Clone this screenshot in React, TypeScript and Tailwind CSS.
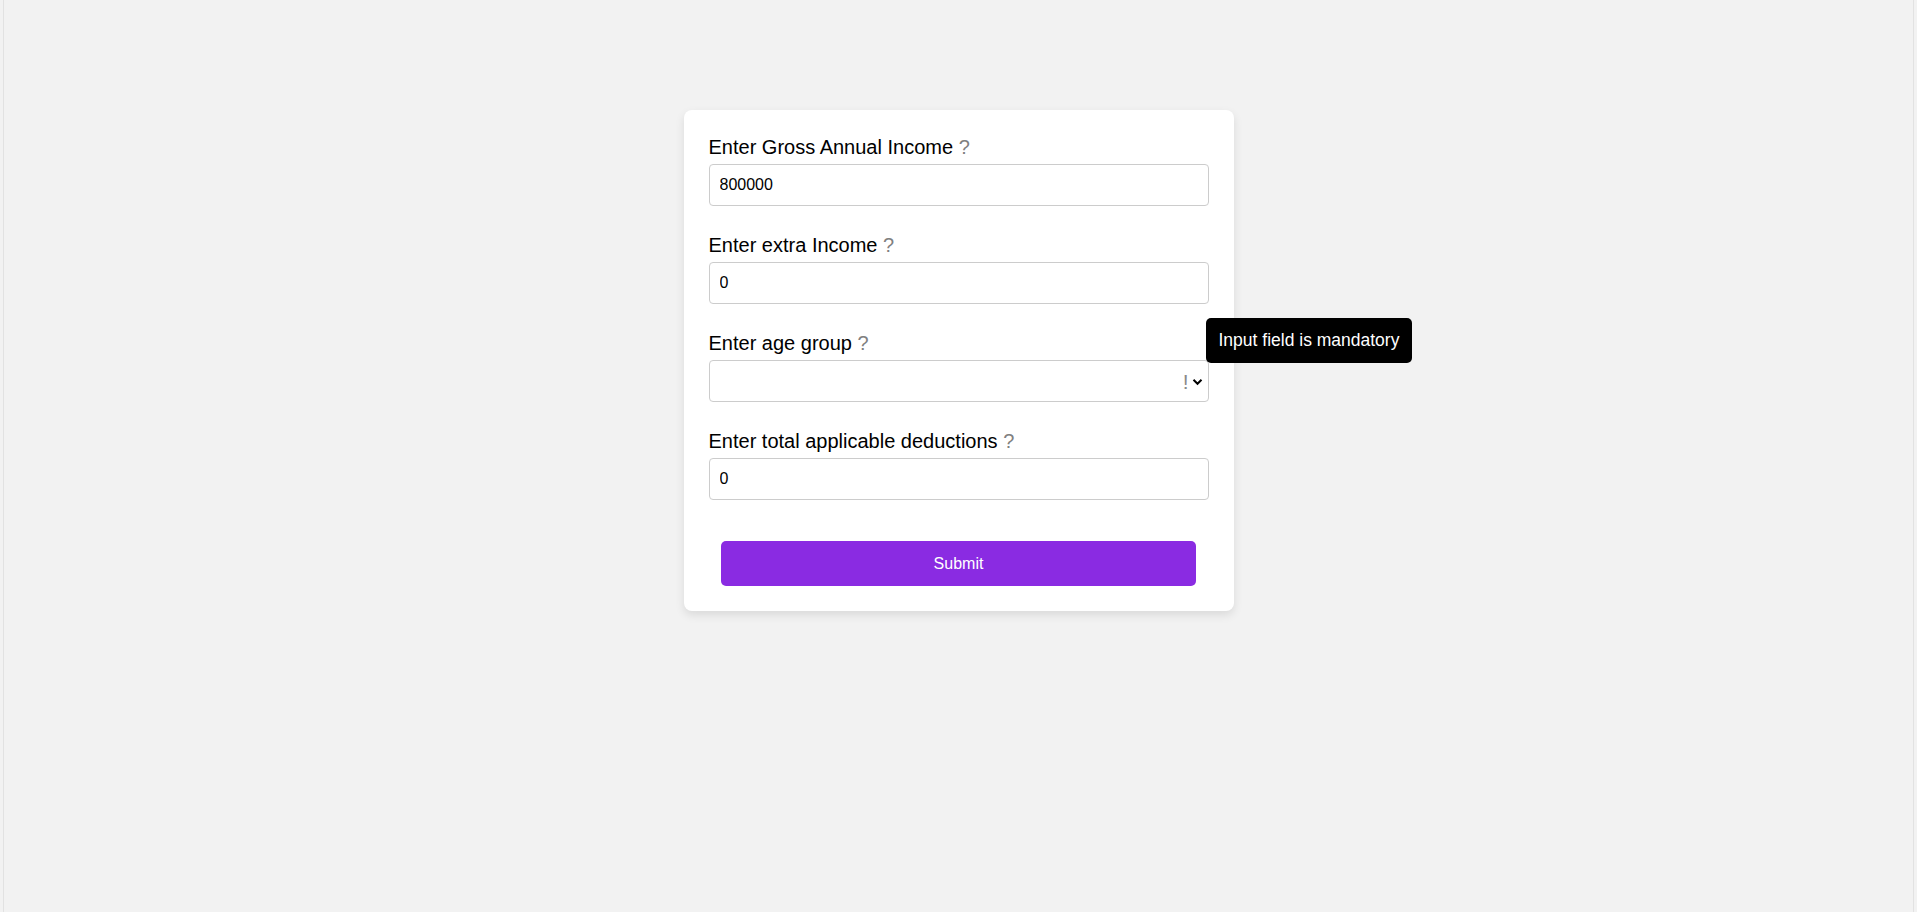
import React from "react";

const font = { fontFamily: '"Liberation Sans", Arial, sans-serif' };

function Field({ label, value, last }: { label: string; value: string; last?: boolean }) {
  return (
    <div className={last ? "flex flex-col" : "mb-[27px] flex flex-col"}>
      <label className="pt-[1px] text-[20px] leading-[23px] text-black">
        {label} <span className="text-[#808080]">?</span>
      </label>
      <input
        readOnly
        value={value}
        className="mt-[5px] h-[42px] w-full rounded-[4px] border border-[#cccccc] bg-white px-[10px] text-[16px] text-black outline-none"
      />
    </div>
  );
}

function AgeSelect() {
  return (
    <div className="mb-[27px] flex flex-col">
      <label className="pt-[1px] text-[20px] leading-[23px] text-black">
        Enter age group <span className="text-[#808080]">?</span>
      </label>
      <div className="relative mt-[5px]">
        <div className="flex h-[42px] w-full items-center justify-end rounded-[4px] border border-[#cccccc] bg-white pr-[5px]">
          <span className="mr-[3px] text-[21px] leading-none text-[#8a8a8a]">!</span>
          <svg width="11" height="8" viewBox="0 0 11 8" className="mt-[2px]">
            <path d="M1.5 1.8 L5.5 5.8 L9.5 1.8" fill="none" stroke="#000" strokeWidth="2" />
          </svg>
        </div>
        <div className="absolute left-[calc(100%-3px)] top-[-42px] flex h-[45px] items-center whitespace-nowrap rounded-[5px] bg-black px-[13px] text-[17.5px] text-white">
          Input field is mandatory
        </div>
      </div>
    </div>
  );
}

export default function App() {
  return (
    <div style={font} className="min-h-[912px] bg-[#f2f2f2] px-[3px]">
      <div className="flex min-h-[912px] justify-center border-x border-[#e2e2e2] pt-[110px]">
        <div className="h-fit w-[550px] rounded-[8px] bg-white p-[25px] shadow-[0_4px_10px_rgba(0,0,0,0.1)]">
          <Field label="Enter Gross Annual Income" value="800000" />
          <Field label="Enter extra Income" value="0" />
          <AgeSelect />
          <Field label="Enter total applicable deductions" value="0" last />
          <div className="mt-[41px] flex justify-center">
            <button className="h-[45px] w-[95%] rounded-[5px] bg-[#8a2be2] text-[16px] text-white">
              Submit
            </button>
          </div>
        </div>
      </div>
    </div>
  );
}
